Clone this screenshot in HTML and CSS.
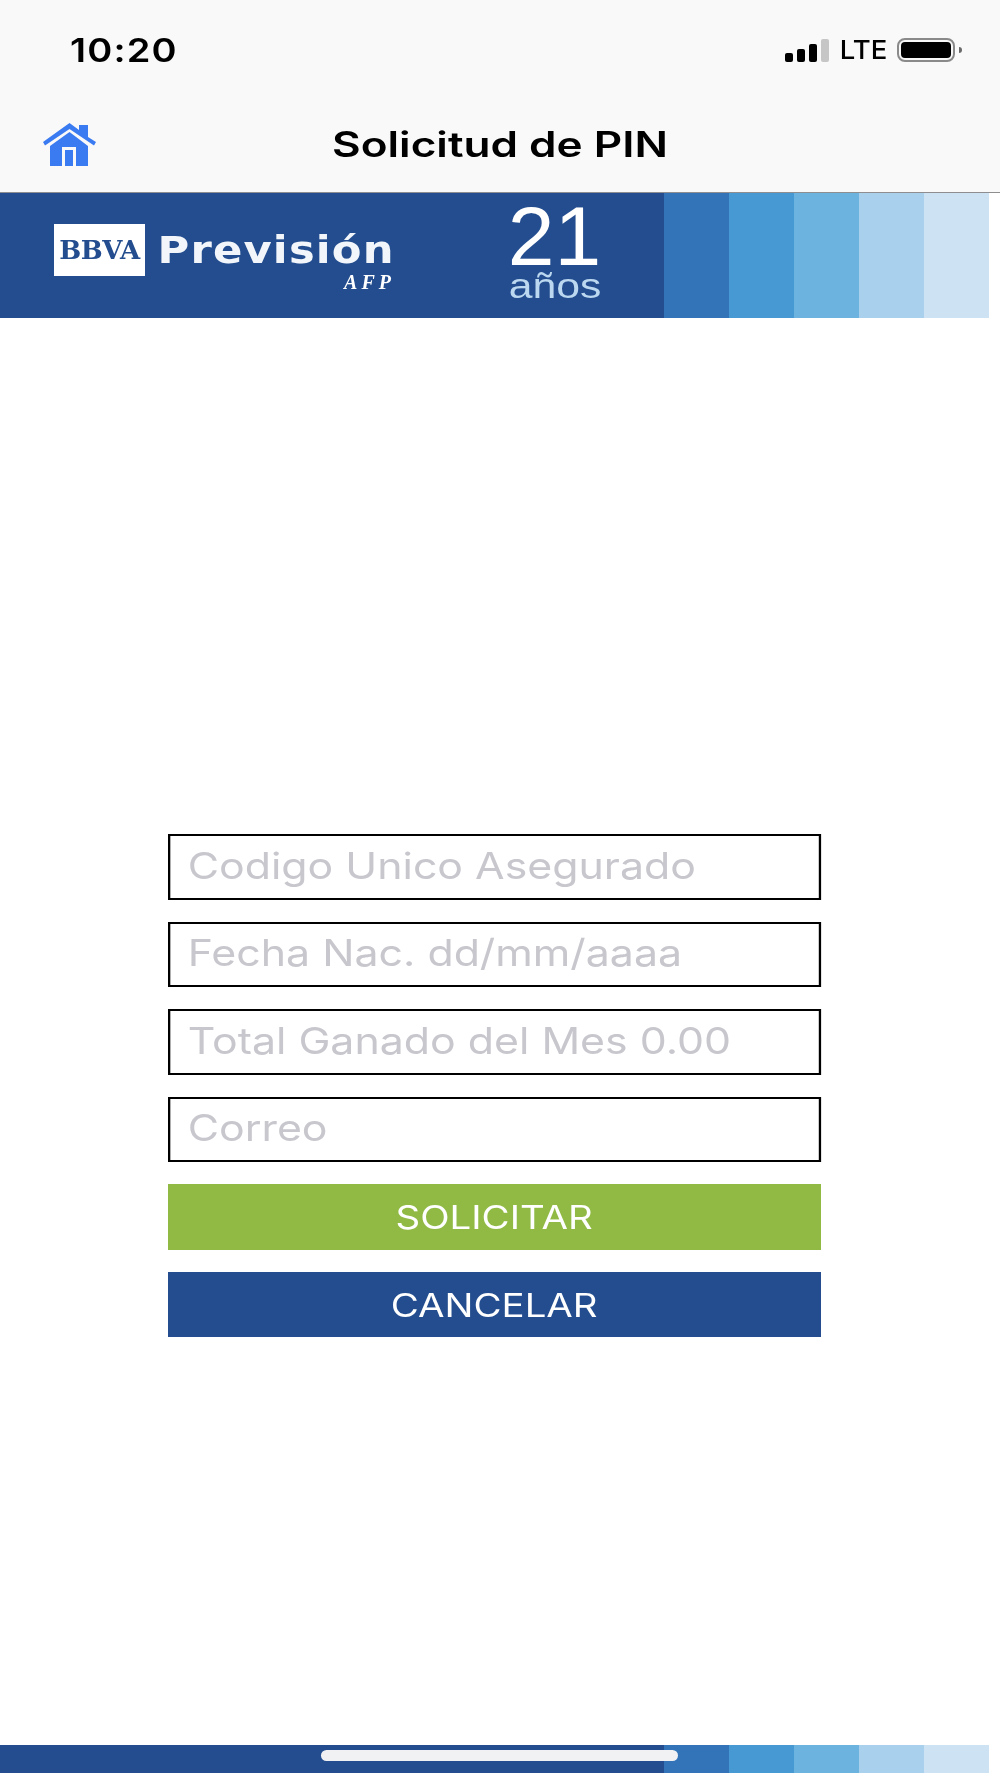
FILE: index.html
```html
<!DOCTYPE html>
<html lang="en">
<head>
  <meta charset="UTF-8">
  <title>Solicitud de PIN</title>
  <link rel="stylesheet" href="styles.css">
</head>
<body>

<div class="screen">
  <!-- Top: status bar and nav -->
  <div class="top-bar">
    <div class="status-bar">
      <span class="time">10:20</span>
      <div class="status-icons">
        <div class="signal">
          <span class="bar bar-1"></span>
          <span class="bar bar-2"></span>
          <span class="bar bar-3"></span>
          <span class="bar bar-4"></span>
        </div>
        <span class="network">LTE</span>
        <div class="battery"><span class="battery-level"></span></div>
        <span class="battery-nub"></span>
      </div>
    </div>
    <div class="nav-bar">
      <a href="#" class="home-btn">
        <svg width="53" height="43" viewBox="0 0 53 43">
          <path d="M0 19 L26.500 0 L36 7 L36 2 L45 2 L45 14 L53 19 L51 22.500 L26.500 6 L2 22.500 Z" fill="#3b7bf2"/>
          <path d="M26.500 9 L45 23 L45 43 L33 43 L33 24 L19 24 L19 43 L7 43 L7 23 Z" fill="#3b7bf2"/>
          <rect x="22" y="27" width="8" height="16" fill="#3b7bf2"/>
        </svg>
      </a>
      <h1 class="nav-title">Solicitud de PIN</h1>
    </div>
  </div>

  <!-- Banner -->
  <div class="banner">
    <div class="banner-main">
      <div class="logo-box">BBVA</div>
      <div class="logo-name">
        <span class="prevision">Previsión</span>
        <span class="afp">AFP</span>
      </div>
      <div class="anniversary">
        <span class="years">21</span>
        <span class="years-label">años</span>
      </div>
    </div>
    <span class="stripe stripe-1"></span>
    <span class="stripe stripe-2"></span>
    <span class="stripe stripe-3"></span>
    <span class="stripe stripe-4"></span>
    <span class="stripe stripe-5"></span>
  </div>

  <!-- Form -->
  <form class="pin-form">
    <input type="text" placeholder="Codigo Unico Asegurado">
    <input type="text" placeholder="Fecha Nac. dd/mm/aaaa">
    <input type="text" placeholder="Total Ganado del Mes 0.00">
    <input type="email" placeholder="Correo">
    <button type="submit" class="btn btn-green"><span class="btn-text">SOLICITAR</span></button>
    <button type="button" class="btn btn-blue"><span class="btn-text">CANCELAR</span></button>
  </form>

  <!-- Footer strip -->
  <div class="footer-strip">
    <div class="banner-main"></div>
    <span class="stripe stripe-1"></span>
    <span class="stripe stripe-2"></span>
    <span class="stripe stripe-3"></span>
    <span class="stripe stripe-4"></span>
    <span class="stripe stripe-5"></span>
    <span class="home-indicator"></span>
  </div>
</div>

</body>
</html>
```

FILE: styles.css
```css
body {
  margin: 0;
  font-family: Inter, 'Liberation Sans', sans-serif;
  background-color: white;
  color: black;
}

.screen {
  display: flex;
  flex-direction: column;
  height: 1778px;
  padding-bottom: 5px;
  box-sizing: border-box;
  overflow: hidden;
}

.top-bar {
  background: #f9f9f9;
  border-bottom: 1px solid #8e8e90;
  height: 193px;
  box-sizing: border-box;
}

.status-bar {
  display: flex;
  justify-content: space-between;
  align-items: center;
  height: 100px;
  padding: 0 38px 0 70px;
}

/* the screenshot is stretched sideways, so the text is too */
.time {
  display: inline-block;
  font-size: 33px;
  font-weight: 600;
  letter-spacing: 1px;
  transform: scaleX(1.15);
  transform-origin: left;
}

.status-icons {
  display: flex;
  align-items: center;
}

.signal {
  display: flex;
  align-items: flex-end;
  gap: 4px;
  height: 23px;
  margin-right: 1px;
}

.bar {
  width: 8px;
  background: black;
  border-radius: 2px;
}

.bar-1 { height: 9px; }
.bar-2 { height: 13px; }
.bar-3 { height: 18px; }
.bar-4 { height: 23px; background: #c6c6c6; }

.network {
  margin-left: 12px;
  font-size: 25px;
  font-weight: 500;
  transform: scaleX(1.1);
}

.battery {
  display: flex;
  margin-left: 12px;
  width: 58px;
  height: 24px;
  box-sizing: border-box;
  padding: 2px;
  border: 2px solid #8a8a8a;
  border-radius: 8px;
}

.battery-level {
  flex: 1;
  background: black;
  border-radius: 4px;
}

.battery-nub {
  width: 3px;
  height: 6px;
  margin-left: 4px;
  background: #6a6a6a;
  border-radius: 0 3px 3px 0;
}

.nav-bar {
  display: flex;
  align-items: center;
  height: 92px;
  padding: 0 0 4px 43px;
  box-sizing: border-box;
}

.home-btn {
  display: flex;
}

.nav-title {
  flex: 1;
  margin: 0 0 0 -53px;
  padding-right: 43px;
  text-align: center;
  font-size: 35px;
  font-weight: 600;
  transform: scaleX(1.26);
  transform-origin: 457px;
}

.banner {
  display: flex;
  width: 989px;
  height: 125px;
  flex-shrink: 0;
}

.banner-main {
  display: flex;
  width: 664px;
  background: #234d8e;
  box-sizing: border-box;
}

.banner .banner-main {
  padding-left: 54px;
}

.stripe {
  flex: 1;
}

.stripe-1 { background: #3373b7; }
.stripe-2 { background: #4699d3; }
.stripe-3 { background: #6cb3e0; }
.stripe-4 { background: #a9d0ed; }
.stripe-5 { background: #cde3f4; }

.logo-box {
  width: 91px;
  height: 52px;
  margin-top: 31px;
  background: white;
  color: #234d8e;
  font-family: 'DejaVu Serif', serif;
  font-size: 26px;
  font-weight: 700;
  letter-spacing: -0.5px;
  line-height: 52px;
  text-align: center;
  filter: blur(0.7px);
}

.logo-name {
  display: flex;
  flex-direction: column;
  align-items: flex-end;
  width: 250px;
  margin-top: 37px;
  color: white;
  filter: blur(0.7px);
}

.prevision {
  font-family: 'DejaVu Sans', sans-serif;
  font-size: 37px;
  line-height: 42px;
  font-weight: 700;
  letter-spacing: 1px;
  color: #f2f6fb;
  transform: scaleX(1.17);
  transform-origin: right;
}

.afp {
  margin-top: 3px;
  font-family: 'Liberation Serif', serif;
  font-size: 20px;
  line-height: 14px;
  font-weight: 700;
  font-style: italic;
  letter-spacing: 4px;
}

.anniversary {
  display: flex;
  flex-direction: column;
  align-items: center;
  width: 95px;
  margin: 9px 0 0 112px;
  color: white;
}

.years {
  font-family: 'Liberation Sans', sans-serif;
  font-size: 84px;
  line-height: 68px;
}

.years-label {
  font-family: 'Liberation Sans', sans-serif;
  font-size: 35px;
  line-height: 32px;
  color: #bcd8f0;
  transform: scaleX(1.22);
}

.pin-form {
  display: flex;
  flex-direction: column;
  align-items: flex-start;
  gap: 22px;
  width: 653px;
  margin: 516px 0 0 168px;
}

.pin-form input {
  width: 564px;
  height: 65.5px;
  box-sizing: border-box;
  padding: 0 15px 3px;
  border: 2px solid #000;
  border-radius: 0;
  outline: none;
  background: white;
  font-family: Inter, sans-serif;
  font-size: 37px;
  transform: scaleX(1.158);
  transform-origin: left;
}

.pin-form input::placeholder {
  color: #c7c7cd;
  opacity: 1;
}

.btn {
  width: 100%;
  height: 65.5px;
  border: none;
  color: white;
  font-family: Inter, sans-serif;
  font-size: 32px;
  padding: 2px 0 0;
}

.btn-text {
  display: inline-block;
  transform: scaleX(1.2);
}

.btn-green { background: #91ba45; }
.btn-blue { background: #234d8e; }

.footer-strip {
  display: flex;
  position: relative;
  width: 989px;
  height: 28px;
  margin-top: auto;
}

.home-indicator {
  position: absolute;
  left: 321px;
  top: 5px;
  width: 357px;
  height: 11px;
  background: #f1f1f3;
  border-radius: 6px;
}
```
